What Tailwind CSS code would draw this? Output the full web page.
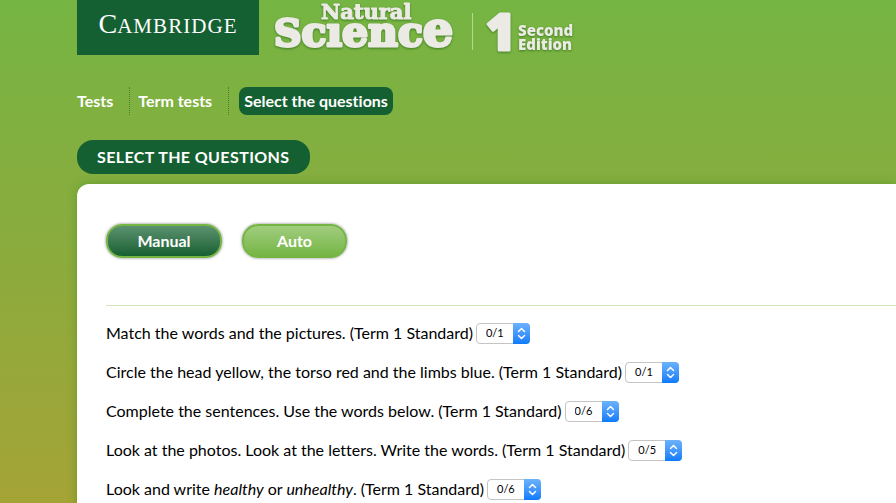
<!DOCTYPE html>
<html lang="en">

<head>
    <meta charset="UTF-8">
    <meta name="viewport" content="width=device-width, initial-scale=1.0">
    <title>Natural Science 1 - Select the questions</title>
    <script src="https://cdn.jsdelivr.net/npm/@tailwindcss/browser@4"></script>
</head>

<body class="flex min-h-screen flex-col overflow-x-hidden bg-linear-to-b from-[#75b543] via-[#8bab3d] to-[#a5a336] pl-[77px] font-['Lato',sans-serif] text-black [font-variant-ligatures:none]">

    <!-- Header -->
    <header class="flex h-14 items-start text-[#eeede9]">
        <a href="#" class="flex h-[55px] w-[182px] items-center justify-center bg-[#156032] pb-2 font-['Liberation_Serif',serif] text-[28px] text-white" aria-label="Cambridge">
            <span>C<span class="text-[21px] tracking-wider">AMBRIDGE</span></span>
        </a>
        <svg class="ml-3 h-14 w-[320px]" viewBox="0 0 320 56" fill="#eceae5" stroke="#eceae5" stroke-linejoin="round">
            <g class="drop-shadow-[0_1px_1px_rgba(0,70,0,0.5)]" font-family="DejaVu Serif, serif" font-weight="bold">
                <text x="50" y="19" font-size="21" stroke-width="1">Natural</text>
                <text x="3" y="46" font-size="38" stroke-width="3">S<tspan font-size="41">c&#305;enc</tspan><tspan font-size="48">e</tspan></text>
            </g>
            <path d="M201.500 13V50" stroke="#b5d797" fill="none" />
            <g class="drop-shadow-[0_1px_1px_rgba(0,70,0,0.5)]" font-family="Open Sans, sans-serif" font-weight="800">
                <text x="215" y="50" font-size="50" stroke-width="3">1</text>
                <text x="247" y="36" font-size="15" stroke-width="0">Second</text>
                <text x="247" y="50" font-size="15" stroke-width="0">Edition</text>
            </g>
        </svg>
    </header>

    <!-- Breadcrumb -->
    <nav class="mt-[31px] flex h-7 items-center text-[16px] font-bold text-white">
        <a href="#" class="flex h-7 items-center border-r border-dotted border-[#4c7f2b] pr-4">Tests</a>
        <a href="#" class="flex h-7 items-center border-r border-dotted border-[#4c7f2b] pr-4 pl-2">Term tests</a>
        <a href="#" class="ml-2.5 flex h-7 items-center rounded-lg bg-[#156032] px-[5px]">Select the questions</a>
    </nav>

    <h1 class="mt-[25px] flex h-[34px] items-center self-start rounded-2xl bg-[#156032] px-5 text-[16px] font-bold tracking-wide text-white uppercase">Select the questions</h1>

    <main class="mt-[10px] flex-1 rounded-tl-xl bg-white pt-10 pl-[29px] shadow-[0_0_8px_rgba(60,140,30,0.5)]">
        <div class="flex gap-5 text-[16px] font-bold text-white">
            <button type="button" class="h-[34px] w-[116px] rounded-2xl border-2 border-[#75b543] bg-linear-to-b from-[#5b9270] to-[#156032] shadow-[0_0_3px_rgba(0,0,0,0.5)]">Manual</button>
            <button type="button" class="h-[34px] w-[105px] rounded-2xl border-2 border-[#75b543] bg-linear-to-b from-[#a1cd7e] to-[#75b543] shadow-[0_0_3px_rgba(0,0,0,0.5)]">Auto</button>
        </div>

        <!-- Questions -->
        <form class="mt-[47px] border-t border-[#d0e7bd] pt-2 text-[16px]">
            <div class="flex h-[39px] items-center gap-[3px]">
                <label for="q1" class="pb-0.5">Match the words and the pictures. (Term 1 Standard)</label>
                <span class="grid h-[21px] w-[54px]">
                    <select id="q1" class="col-start-1 row-start-1 appearance-none rounded border border-[#c4c4c4] bg-white pl-[9px] text-[11px]">
                        <option>0/1</option>
                        <option>1/1</option>
                    </select>
                    <svg class="pointer-events-none col-start-1 row-start-1 h-[21px] w-[17px] justify-self-end rounded-r bg-linear-to-b from-[#6bb2fb] to-[#087bfb]" viewBox="0 0 17 21" fill="none" stroke="white" stroke-width="1.500" stroke-linecap="round" stroke-linejoin="round">
                        <path d="M5.500 8.500L8.500 5.500L11.500 8.500M5.500 12.500L8.500 15.500L11.500 12.500" />
                    </svg>
                </span>
            </div>
            <div class="flex h-[39px] items-center gap-[3px]">
                <label for="q2" class="pb-0.5">Circle the head yellow, the torso red and the limbs blue. (Term 1 Standard)</label>
                <span class="grid h-[21px] w-[54px]">
                    <select id="q2" class="col-start-1 row-start-1 appearance-none rounded border border-[#c4c4c4] bg-white pl-[9px] text-[11px]">
                        <option>0/1</option>
                        <option>1/1</option>
                    </select>
                    <svg class="pointer-events-none col-start-1 row-start-1 h-[21px] w-[17px] justify-self-end rounded-r bg-linear-to-b from-[#6bb2fb] to-[#087bfb]" viewBox="0 0 17 21" fill="none" stroke="white" stroke-width="1.500" stroke-linecap="round" stroke-linejoin="round">
                        <path d="M5.500 8.500L8.500 5.500L11.500 8.500M5.500 12.500L8.500 15.500L11.500 12.500" />
                    </svg>
                </span>
            </div>
            <div class="flex h-[39px] items-center gap-[3px]">
                <label for="q3" class="pb-0.5">Complete the sentences. Use the words below. (Term 1 Standard)</label>
                <span class="grid h-[21px] w-[54px]">
                    <select id="q3" class="col-start-1 row-start-1 appearance-none rounded border border-[#c4c4c4] bg-white pl-[9px] text-[11px]">
                        <option>0/6</option>
                        <option>6/6</option>
                    </select>
                    <svg class="pointer-events-none col-start-1 row-start-1 h-[21px] w-[17px] justify-self-end rounded-r bg-linear-to-b from-[#6bb2fb] to-[#087bfb]" viewBox="0 0 17 21" fill="none" stroke="white" stroke-width="1.500" stroke-linecap="round" stroke-linejoin="round">
                        <path d="M5.500 8.500L8.500 5.500L11.500 8.500M5.500 12.500L8.500 15.500L11.500 12.500" />
                    </svg>
                </span>
            </div>
            <div class="flex h-[39px] items-center gap-[3px]">
                <label for="q4" class="pb-0.5">Look at the photos. Look at the letters. Write the words. (Term 1 Standard)</label>
                <span class="grid h-[21px] w-[54px]">
                    <select id="q4" class="col-start-1 row-start-1 appearance-none rounded border border-[#c4c4c4] bg-white pl-[9px] text-[11px]">
                        <option>0/5</option>
                        <option>5/5</option>
                    </select>
                    <svg class="pointer-events-none col-start-1 row-start-1 h-[21px] w-[17px] justify-self-end rounded-r bg-linear-to-b from-[#6bb2fb] to-[#087bfb]" viewBox="0 0 17 21" fill="none" stroke="white" stroke-width="1.500" stroke-linecap="round" stroke-linejoin="round">
                        <path d="M5.500 8.500L8.500 5.500L11.500 8.500M5.500 12.500L8.500 15.500L11.500 12.500" />
                    </svg>
                </span>
            </div>
            <div class="flex h-[39px] items-center gap-[3px]">
                <label for="q5" class="pb-0.5">Look and write <i>healthy</i> or <i>unhealthy</i>. (Term 1 Standard)</label>
                <span class="grid h-[21px] w-[54px]">
                    <select id="q5" class="col-start-1 row-start-1 appearance-none rounded border border-[#c4c4c4] bg-white pl-[9px] text-[11px]">
                        <option>0/6</option>
                        <option>6/6</option>
                    </select>
                    <svg class="pointer-events-none col-start-1 row-start-1 h-[21px] w-[17px] justify-self-end rounded-r bg-linear-to-b from-[#6bb2fb] to-[#087bfb]" viewBox="0 0 17 21" fill="none" stroke="white" stroke-width="1.500" stroke-linecap="round" stroke-linejoin="round">
                        <path d="M5.500 8.500L8.500 5.500L11.500 8.500M5.500 12.500L8.500 15.500L11.500 12.500" />
                    </svg>
                </span>
            </div>
        </form>
    </main>

</body>

</html>
